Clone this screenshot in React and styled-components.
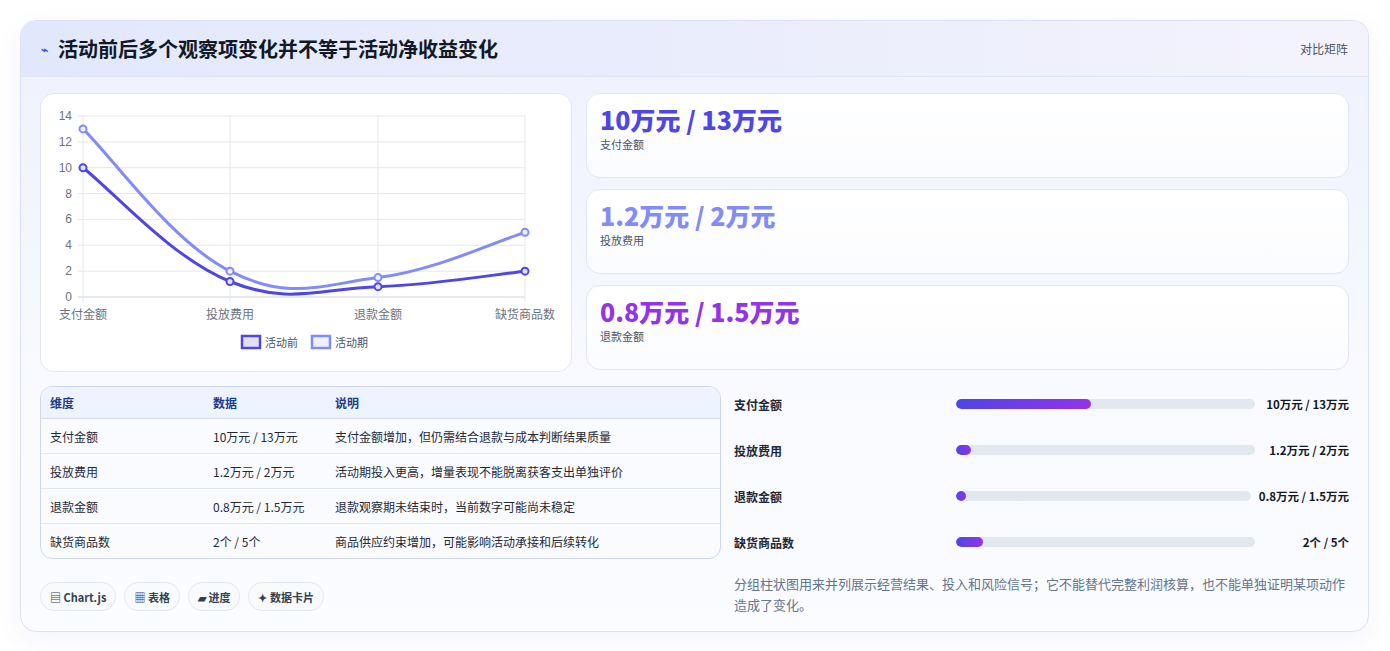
import React from 'react';
import styled, { createGlobalStyle } from 'styled-components';

const GlobalStyle = createGlobalStyle`
  body {
    margin: 0;
    background: #ffffff;
    font-family: "Noto Sans CJK SC", "Noto Sans", sans-serif;
  }
`;

const Page = styled.div`
  padding: 20px 21px 20px 20px;
`;

const Panel = styled.section`
  border: 1px solid #dbe1f5;
  border-radius: 16px;
  background: linear-gradient(180deg, #eef1fd 0%, #f8faff 60%, #fbfcff 100%);
  box-shadow: 0 8px 24px rgba(99, 102, 241, 0.08);
  overflow: hidden;
`;

const Header = styled.header`
  height: 55px;
  padding: 0 20px;
  display: flex;
  align-items: center;
  justify-content: space-between;
  background: linear-gradient(90deg, #e2e8fc 0%, #eceefc 60%, #f4f3fd 100%);
  border-bottom: 1px solid #e0e6f6;
`;

const Title = styled.h1`
  margin: 0;
  font-size: 20px;
  font-weight: 700;
  color: #111827;
  display: flex;
  align-items: center;
  gap: 10px;
`;

const TitleIcon = styled.span`
  color: #3b5bdb;
  font-size: 12px;
`;

const HeaderTag = styled.span`
  font-size: 12px;
  color: #4b5563;
`;

const Body = styled.div`
  padding: 16px 19px 16px 19px;
  display: flex;
  flex-direction: column;
  gap: 14px;
`;

const TopGrid = styled.div`
  display: grid;
  grid-template-columns: 532px 1fr;
  gap: 14px;
`;

const BottomGrid = styled.div`
  display: grid;
  grid-template-columns: 681px 1fr;
  gap: 13px;
`;

const Card = styled.div`
  background: #ffffff;
  border: 1px solid #e1e7f3;
  border-radius: 14px;
`;

const ChartCard = styled(Card)`
  height: 277px;
`;

const StatStack = styled.div`
  display: flex;
  flex-direction: column;
  gap: 11px;
`;

const StatCard = styled(Card)`
  height: 85px;
  box-sizing: border-box;
  padding: 9px 13px;
  background: linear-gradient(180deg, #ffffff, #fbfcff);
`;

const StatValue = styled.div`
  font-size: 25px;
  font-weight: 800;
  line-height: 32px;
  color: ${p => p.color};
`;

const StatLabel = styled.div`
  font-size: 11px;
  color: #475569;
  margin-top: 1px;
`;

const LeftCol = styled.div`
  display: flex;
  flex-direction: column;
  gap: 23px;
`;

const Table = styled.table`
  width: 100%;
  border-collapse: separate;
  border-spacing: 0;
  border: 1px solid #cfd8ea;
  border-radius: 12px;
  overflow: hidden;
  background: #f9fbfe;
  font-size: 12px;
`;

const Th = styled.th`
  text-align: left;
  font-weight: 700;
  color: #1e3a8a;
  background: #eef4ff;
  height: 31px;
  padding: 0 9px;
  border-bottom: 1px solid #d7dfee;
  width: ${p => p.w || 'auto'};
`;

const Td = styled.td`
  height: 34px;
  padding: 0 9px;
  color: #1f2937;
  border-top: ${p => (p.first ? 'none' : '1px solid #e1e7f1')};
`;

const Chips = styled.div`
  display: flex;
  gap: 8px;
`;

const Chip = styled.span`
  height: 27px;
  padding: 0 9px;
  display: inline-flex;
  align-items: center;
  border: 1px solid #e2e8f0;
  border-radius: 14px;
  background: #f8fafc;
  font-size: 11px;
  font-weight: 700;
  color: #334155;
`;

const RightCol = styled.div`
  display: flex;
  flex-direction: column;
  gap: 10px;
`;

const BarRow = styled.div`
  display: grid;
  grid-template-columns: 214px 1fr auto;
  align-items: center;
  gap: 8px;
  height: 36px;
`;

const BarLabel = styled.span`
  font-size: 12px;
  font-weight: 700;
  color: #1f2937;
`;

const Track = styled.div`
  height: 10px;
  border-radius: 5px;
  background: #e2e8f0;
  overflow: hidden;
`;

const Fill = styled.div`
  height: 100%;
  min-width: 10px;
  border-radius: 5px;
  background: linear-gradient(90deg, #4f46e5, #9333ea);
`;

const BarValue = styled.span`
  font-size: 11.5px;
  font-weight: 700;
  color: #111827;
  min-width: 86px;
  text-align: right;
`;

const Note = styled.p`
  margin: 3px 0 0;
  font-size: 13px;
  line-height: 21px;
  color: #64748b;
  padding-right: 4px;
`;

const xs = [42, 189, 337, 484];
const yOf = v => 203 - v * 12.93;

function curve(vals) {
  const pts = vals.map((v, i) => [xs[i], yOf(v)]);
  let d = `M${pts[0][0]},${pts[0][1]}`;
  for (let i = 0; i < pts.length - 1; i++) {
    const p0 = pts[i - 1] || pts[i];
    const p1 = pts[i];
    const p2 = pts[i + 1];
    const p3 = pts[i + 2] || p2;
    const t = 0.2;
    const c1 = [p1[0] + (p2[0] - p0[0]) * t, p1[1] + (p2[1] - p0[1]) * t];
    const c2 = [p2[0] - (p3[0] - p1[0]) * t, p2[1] - (p3[1] - p1[1]) * t];
    d += ` C${c1[0]},${c1[1]} ${c2[0]},${c2[1]} ${p2[0]},${p2[1]}`;
  }
  return d;
}

const series = [
  { name: '活动前', vals: [10, 1.2, 0.8, 2], color: '#4f46e5', bg: '#e0e0fb' },
  { name: '活动期', vals: [13, 2, 1.5, 5], color: '#818cf8', bg: '#eef0fe' },
];
const cats = ['支付金额', '投放费用', '退款金额', '缺货商品数'];

function LineChart() {
  return (
    <svg width="532" height="277" viewBox="0 0 532 277">
      {[0, 2, 4, 6, 8, 10, 12, 14].map(v => (
        <g key={v}>
          <line x1="37" x2="484" y1={yOf(v)} y2={yOf(v)} stroke={v === 0 ? '#cbd5e1' : '#e5e7eb'} />
          <text x="31" y={yOf(v) + 4} textAnchor="end" fontSize="12" fill="#6b7280" fontFamily="Liberation Sans, sans-serif">{v}</text>
        </g>
      ))}
      {xs.map(x => (
        <line key={x} x1={x} x2={x} y1={yOf(14)} y2={yOf(0) + 5} stroke="#e5e7eb" />
      ))}
      {cats.map((c, i) => (
        <text key={c} x={xs[i]} y="225" textAnchor="middle" fontSize="12" fill="#6b7280">{c}</text>
      ))}
      {series.slice().reverse().map(s => (
        <g key={s.name}>
          <path d={curve(s.vals)} fill="none" stroke={s.color} strokeWidth="3" />
          {s.vals.map((v, i) => (
            <circle key={i} cx={xs[i]} cy={yOf(v)} r="3.5" fill={s.bg} stroke={s.color} strokeWidth="2" />
          ))}
        </g>
      ))}
      {series.map((s, i) => (
        <g key={s.name} transform={`translate(${200 + i * 70},241)`}>
          <rect x="1" y="1" width="18" height="12" fill={s.bg} stroke={s.color} strokeWidth="2.5" />
          <text x="24" y="12" fontSize="11" fill="#4b5563">{s.name}</text>
        </g>
      ))}
    </svg>
  );
}

const rows = [
  ['支付金额', '10万元 / 13万元', '支付金额增加，但仍需结合退款与成本判断结果质量', 45],
  ['投放费用', '1.2万元 / 2万元', '活动期投入更高，增量表现不能脱离获客支出单独评价', 5],
  ['退款金额', '0.8万元 / 1.5万元', '退款观察期未结束时，当前数字可能尚未稳定', 3],
  ['缺货商品数', '2个 / 5个', '商品供应约束增加，可能影响活动承接和后续转化', 9],
];

export default function App() {
  return (
    <>
      <GlobalStyle />
      <Page>
        <Panel>
          <Header>
            <Title><TitleIcon>⌁</TitleIcon>活动前后多个观察项变化并不等于活动净收益变化</Title>
            <HeaderTag>对比矩阵</HeaderTag>
          </Header>
          <Body>
            <TopGrid>
              <ChartCard><LineChart /></ChartCard>
              <StatStack>
                <StatCard><StatValue color="#4f46e5">10万元 / 13万元</StatValue><StatLabel>支付金额</StatLabel></StatCard>
                <StatCard><StatValue color="#818cf8">1.2万元 / 2万元</StatValue><StatLabel>投放费用</StatLabel></StatCard>
                <StatCard><StatValue color="#9333ea">0.8万元 / 1.5万元</StatValue><StatLabel>退款金额</StatLabel></StatCard>
              </StatStack>
            </TopGrid>
            <BottomGrid>
              <LeftCol>
                <Table>
                  <thead>
                    <tr><Th w="145px">维度</Th><Th w="104px">数据</Th><Th>说明</Th></tr>
                  </thead>
                  <tbody>
                    {rows.map((r, i) => (
                      <tr key={r[0]}>
                        <Td first={i === 0}>{r[0]}</Td>
                        <Td first={i === 0}>{r[1]}</Td>
                        <Td first={i === 0}>{r[2]}</Td>
                      </tr>
                    ))}
                  </tbody>
                </Table>
                <Chips>
                  <Chip>▤ Chart.js</Chip>
                  <Chip>▦ 表格</Chip>
                  <Chip>▰ 进度</Chip>
                  <Chip>✦ 数据卡片</Chip>
                </Chips>
              </LeftCol>
              <RightCol>
                {rows.map(r => (
                  <BarRow key={r[0]}>
                    <BarLabel>{r[0]}</BarLabel>
                    <Track><Fill style={{ width: `${r[3]}%` }} /></Track>
                    <BarValue>{r[1]}</BarValue>
                  </BarRow>
                ))}
                <Note>分组柱状图用来并列展示经营结果、投入和风险信号；它不能替代完整利润核算，也不能单独证明某项动作造成了变化。</Note>
              </RightCol>
            </BottomGrid>
          </Body>
        </Panel>
      </Page>
    </>
  );
}
